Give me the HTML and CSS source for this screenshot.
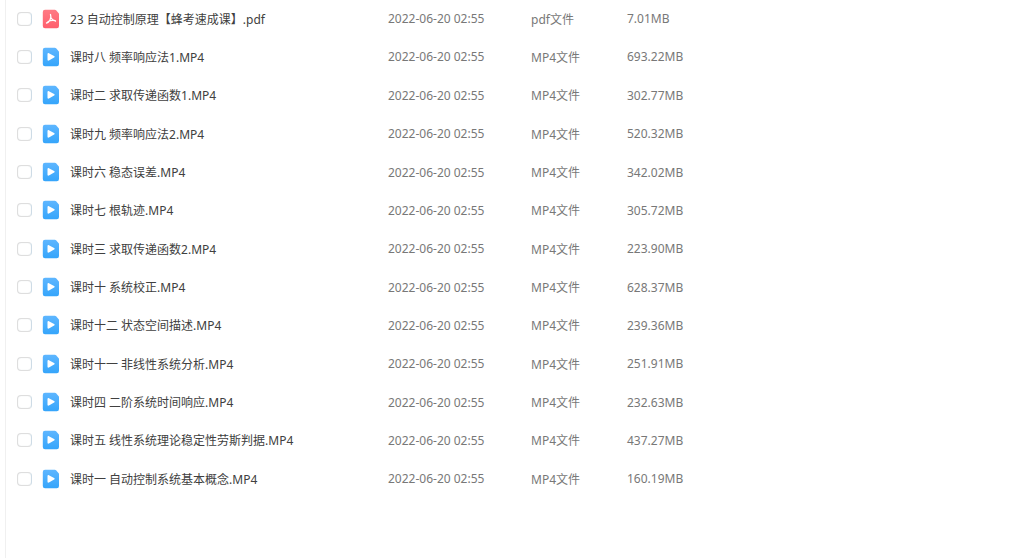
FILE: index.html
```
<!DOCTYPE html>
<html lang="zh-CN">
<head>
    <meta charset="UTF-8">
    <meta name="viewport" content="width=device-width, initial-scale=1.0">
    <title>文件列表</title>
    <link rel="stylesheet" href="styles.css">
</head>
<body>
    <svg class="sprite" aria-hidden="true">
        <defs>
            <linearGradient id="blue" x1="0" y1="0" x2="0" y2="1">
                <stop offset="0" stop-color="#5eb6ff"/>
                <stop offset="1" stop-color="#35a5fb"/>
            </linearGradient>
            <linearGradient id="red" x1="0" y1="0" x2="0" y2="1">
                <stop offset="0" stop-color="#ff7a84"/>
                <stop offset="1" stop-color="#ff5f6d"/>
            </linearGradient>
        </defs>
        <symbol id="icon-video" viewBox="0 0 18 20">
            <path d="M3 .8h9.800q.8 0 1.300.5l2.400 2.600q.5.500.5 1.300V17a2.200 2.200 0 0 1-2.200 2.200H3A2.200 2.200 0 0 1 .8 17V3A2.200 2.200 0 0 1 3 .8z" fill="url(#blue)"/>
            <path d="M5.500 7c0-.8.700-1.200 1.400-.8l5.200 2.900c.7.400.7 1.100 0 1.500l-5.200 2.900c-.7.400-1.400 0-1.400-.8z" fill="#fff"/>
        </symbol>
        <symbol id="icon-pdf" viewBox="0 0 18 20">
            <path d="M3 .8h9.800q.8 0 1.300.5l2.400 2.600q.5.500.5 1.300V17a2.200 2.200 0 0 1-2.200 2.200H3A2.200 2.200 0 0 1 .8 17V3A2.200 2.200 0 0 1 3 .8z" fill="url(#red)"/>
            <path d="M8.500 5.500c.8 2 .6 3.500-.5 5.500c-.8 1.500-2 2.800-3.500 3M8.800 8.500c.8 1.800 2.700 3 4.700 3.500M6 12.500c2-.9 4-1.400 7-.9" fill="none" stroke="#fff" stroke-width="1.300" stroke-linecap="round"/>
        </symbol>
    </svg>
    <main class="panel">
        <table class="file-list">
            <tbody id="files"></tbody>
        </table>
    </main>
    <script src="script.js"></script>
</body>
</html>
```
FILE: styles.css
```
body {
    margin: 0;
    background-color: #fff;
    font-family: "Noto Sans", "Noto Sans CJK SC", sans-serif;
    font-size: 12px;
    color: #787878;
}
.sprite {
    position: absolute;
    width: 0;
    height: 0;
}
.panel {
    box-sizing: border-box;
    min-height: 100vh;
    margin-left: 5px;
    border-left: 1px solid #f0f0f0;
}
.file-list {
    width: 100%;
    table-layout: fixed;
    border-collapse: collapse;
}
td {
    height: 38px;
    padding: 0;
    white-space: nowrap;
}
tr:first-child td {
    height: 37px;
}
tr:nth-child(2) td,
tr:nth-child(3n+4) td {
    height: 39px;
}
.check {
    width: 36px;
}
.name {
    width: 346px;
}
.time {
    width: 143px;
}
.type {
    width: 96px;
}
.check input {
    display: block;
    appearance: none;
    width: 15px;
    height: 14px;
    margin: 0 0 0 11px;
    border: 1px solid #dedede;
    border-right-color: #cddbe6;
    border-radius: 4px;
    background-color: #fff;
    box-shadow: inset 0 0 1px #d8dde2;
}
.check input:checked {
    background-color: #35a5fb;
}
.name label {
    display: flex;
    align-items: center;
    gap: 10px;
    color: #404040;
}
.icon {
    width: 18px;
    height: 20px;
}
```
FILE: script.js
```
const files = [
    ['23 自动控制原理【蜂考速成课】.pdf', '7.01MB'],
    ['课时八 频率响应法1.MP4', '693.22MB'],
    ['课时二 求取传递函数1.MP4', '302.77MB'],
    ['课时九 频率响应法2.MP4', '520.32MB'],
    ['课时六 稳态误差.MP4', '342.02MB'],
    ['课时七 根轨迹.MP4', '305.72MB'],
    ['课时三 求取传递函数2.MP4', '223.90MB'],
    ['课时十 系统校正.MP4', '628.37MB'],
    ['课时十二 状态空间描述.MP4', '239.36MB'],
    ['课时十一 非线性系统分析.MP4', '251.91MB'],
    ['课时四 二阶系统时间响应.MP4', '232.63MB'],
    ['课时五 线性系统理论稳定性劳斯判据.MP4', '437.27MB'],
    ['课时一 自动控制系统基本概念.MP4', '160.19MB']
];

document.getElementById('files').innerHTML = files.map(([name, size], i) => {
    const ext = name.split('.').pop();
    const icon = ext === 'pdf' ? 'pdf' : 'video';
    return `<tr>
        <td class="check"><input type="checkbox" id="file-${i}"></td>
        <td class="name"><label for="file-${i}"><svg class="icon"><use href="#icon-${icon}"/></svg>${name}</label></td>
        <td class="time">2022-06-20 02:55</td>
        <td class="type">${ext}文件</td>
        <td class="size">${size}</td>
    </tr>`;
}).join('');
```
